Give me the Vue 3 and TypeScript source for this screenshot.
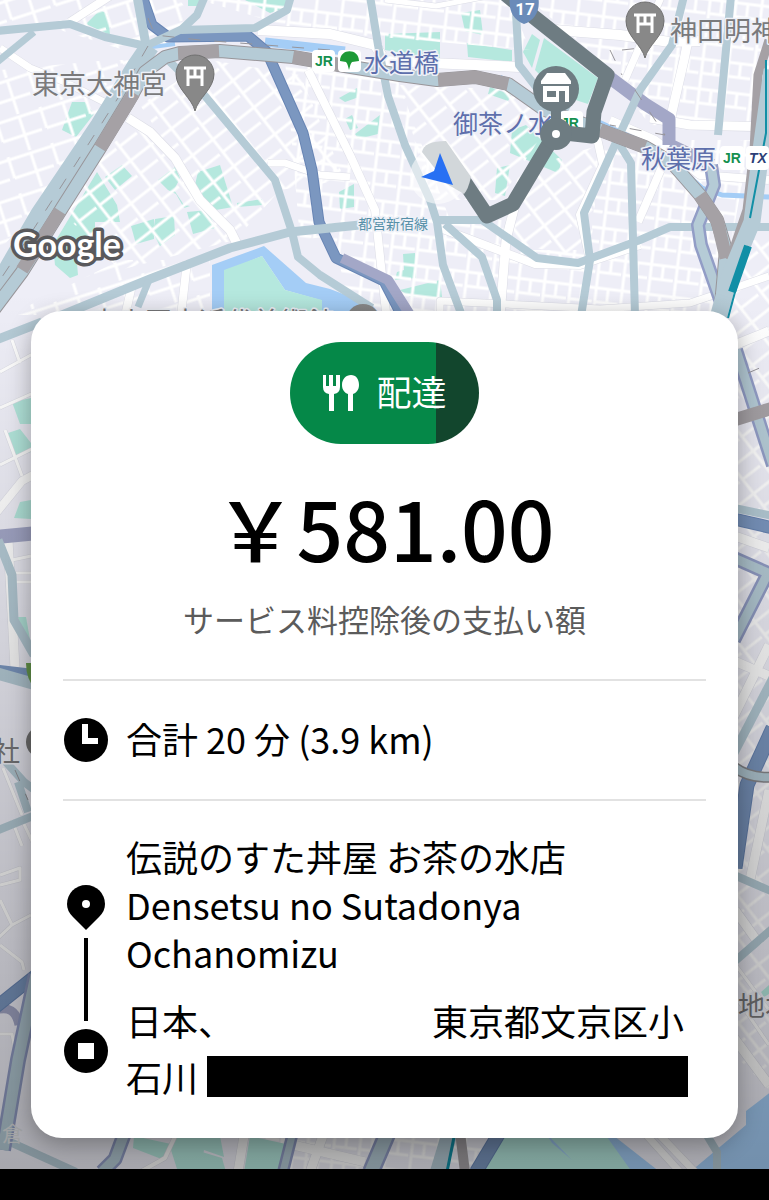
<script setup lang="ts">
interface Road {
  d: string
  w: number
}

const shrines: { x: number; y: number }[] = [
  { x: 195, y: 74 },
  { x: 645, y: 21 },
]

const blocks: { d: string; grid: string }[] = [
  { d: 'M0 0H180L200 30L140 55L60 30H0Z', grid: 'wide' },
  { d: 'M0 70L110 60L140 60L100 120L30 215L0 250Z', grid: 'wide' },
  { d: 'M100 155L140 120L190 190L235 240L120 270L65 215Z', grid: 'tilt' },
  { d: 'M140 105L210 60L300 75L345 180L280 190L235 240L170 150Z', grid: 'tilt' },
  { d: 'M0 320L120 260L210 260V315H0Z', grid: 'wide' },
  { d: 'M200 0H510L530 50L300 30Z', grid: 'dense' },
  { d: 'M285 60H390L450 220L300 240Z', grid: 'dense' },
  { d: 'M330 220H505V312H350Z', grid: 'dense' },
  { d: 'M400 85L520 90L545 130L500 200H430Z', grid: 'tilt' },
  { d: 'M520 170L600 145L590 260L500 240Z', grid: 'tilt' },
  { d: 'M505 250H730L715 312H505Z', grid: 'dense' },
  { d: 'M530 0H769V130L650 125L600 60Z', grid: 'dense' },
  { d: 'M600 140H750L730 250H590Z', grid: 'dense' },
  { d: 'M730 240H769V1090L730 1050Z', grid: 'tilt' },
  { d: 'M270 1130H500L470 1169H250Z', grid: 'dense' },
]

const parks: string[] = [
  'M188 0H206L204 6H188Z', 'M245 0H290L285 8L270 13Z', 'M86 24L100 10L108 14L110 35Z',
  'M72 102H85L94 114L76 137L62 130Z',
  'M97 172L117 205L120 222H95V235L75 240L78 275L70 278L55 265L53 245Z',
  'M105 177L122 165L132 176L115 190Z',
  'M158 180L175 167L180 178L174 190L184 205L190 206L184 208L176 194L168 190Z',
  'M198 172L220 165L233 207L210 211L193 193Z', 'M187 212L208 210L215 228L193 234Z',
  'M131 226L154 219V239L136 244Z', 'M155 219L174 216L175 235L160 246L153 233Z',
  'M237 203L262 199V205L237 207Z', 'M339 98L357 88L359 97L345 102Z',
  'M345 119L352 115L358 128L350 130Z', 'M355 134L380 115L378 134L358 139Z',
  'M339 192L354 184V207L340 209Z',
  'M385 34L440 32V60L385 50Z', 'M461 13L480 10L483 35L465 31Z',
  'M467 43L512 50V62L468 57Z', 'M523 52L532 34L540 40L532 68Z',
  'M490 87L511 95L508 101L488 94Z',
  'M512 130L526 125L562 160L558 173L510 153Z', 'M497 168L510 165L505 196L495 193Z',
  'M403 254L415 253L416 278L395 280L397 272L404 270Z', 'M400 290L440 280L442 297L410 297Z',
  'M12 402L31 398V424H20Z', 'M5 434L20 429L31 443L34 451L16 457Z',
  'M20 502L31 500V519L14 518Z', 'M18 617H26L31 645L20 630Z',
  'M134 1136L171 1144L164 1160L133 1148Z',
  'M769 985L761 992L764 997L769 994Z',
]

const openParks: string[] = [
  'M544 38L598 78L588 104L560 95L535 70Z',
  'M505 1130H602L640 1172H484Z',
  'M176 1136H220L224 1157L204 1150L200 1172H178L171 1150Z',
  'M202 1152L222 1158L226 1172H196Z',
  'M250 1136L286 1144L278 1172H244Z',
]

const waters: string[] = [
  'M212 265L264 246L306 283L330 289L372 305L382 316H322L320 300L285 290L262 256L224 272V316H212Z',
  'M602 1130L632 1172H660L600 1125Z', 'M545 1132L572 1160L552 1143Z',
  'M772 1091L746 1111V1125L690 1172H772Z',
]

const waterLines: Road[] = [
  { d: 'M265 42L345 51', w: 9 },
  { d: 'M48 238L80 165', w: 4 },
  { d: 'M0 276L20 240', w: 4 },
  { d: 'M500 77L530 96M590 118L660 150L702 188L722 195L769 197', w: 5 },
  { d: 'M145 48L175 44', w: 4 },
]

const streets: Road[] = [
  { d: 'M70 22L110 -4', w: 8 },
  { d: 'M0 48L30 68L65 82L108 104', w: 7 },
  { d: 'M258 30L330 34L375 45L385 61L520 67', w: 10 },
  { d: 'M128 118L150 132L175 158L200 200L230 230L238 246', w: 9 },
  { d: 'M308 70L350 155L375 210L386 312', w: 8 },
  { d: 'M268 163L285 163L320 175L350 177', w: 7 },
  { d: 'M187 262L181 316M132 285L125 316', w: 8 },
  { d: 'M555 30L620 35L670 42L700 41', w: 10 },
  { d: 'M692 20L684 60L672 112L666 150', w: 9 },
  { d: 'M625 80L662 -5', w: 7 },
  { d: 'M650 118L690 125L769 127', w: 9 },
  { d: 'M610 120L655 140L700 175L769 180', w: 8 },
  { d: 'M597 138L603 165L580 215L590 260', w: 8 },
  { d: 'M665 160L638 222', w: 8 },
  { d: 'M515 205L506 240L500 316', w: 9 },
  { d: 'M440 228L535 264L580 265L640 245', w: 8 },
  { d: 'M440 312V301L505 304L600 309L690 303L720 293L769 276', w: 7 },
  { d: 'M385 0L436 6L510 -8', w: 5 },
  { d: 'M-4 513L22 481L42 470', w: 8 },
  { d: 'M8 540L15 668', w: 9 },
  { d: 'M0 372L40 350M0 408L40 390M0 465L40 445M12 340L20 363M5 430L22 476', w: 3 },
  { d: 'M12 560L36 555M14 573H36M15 582H36', w: 3 },
  { d: 'M732 346L769 331M732 535L769 548M732 660L769 676', w: 9 },
  { d: 'M769 645L732 720M769 790L750 880M732 1035L769 1085M735 910L760 945', w: 9 },
  { d: 'M3 768L22 815M12 820L22 846M22 820L34 845M0 875L20 868V880L0 885M0 900L12 925L31 915M0 945L22 962L24 970M12 925L-4 940M0 1034L12 1034L14 1045', w: 3 },
  { d: 'M732 960L769 1010M738 1000L769 1045', w: 3 },
  { d: 'M245 1130L238 1172M285 1143L365 1162M325 1130L310 1172', w: 9 },
  { d: 'M655 1130L695 1172M640 1128L680 1172', w: 7 },
  { d: 'M140 1172L165 1158L178 1130', w: 4 },
]

const roads: Road[] = [
  { d: 'M-4 31L70 24L105 37L146 46', w: 8 },
  { d: 'M-4 63L34 32', w: 7 },
  { d: 'M137 -4L146 45', w: 9 },
  { d: 'M148 45L180 30L255 28L287 10L291 -4', w: 8 },
  { d: 'M205 -4L197 15L180 31', w: 8 },
  { d: 'M168 60L205 96L240 138L275 180L292 232L298 257L320 275L372 308', w: 8 },
  { d: 'M45 322L150 279L230 248L290 232L360 225', w: 9 },
  { d: 'M149 280L138 307', w: 7 },
  { d: 'M370 -4L378 45L388 96L405 145L430 200L437 222L443 265L462 316', w: 8 },
  { d: 'M436 220H482L537 258L578 263L640 240L670 227H773', w: 8 },
  { d: 'M445 224L482 257L497 300V316', w: 8 },
  { d: 'M515 -4L519 65L540 92L570 108', w: 8 },
  { d: 'M684 -4L672 45L640 90L618 138L584 213L590 260L581 316', w: 8 },
  { d: 'M618 142L631 163L635 316', w: 8 },
  { d: 'M731 -4L718 135', w: 8 },
  { d: 'M-4 340L42 322', w: 9 },
  { d: 'M-2 540L12 575L14 620L34 655', w: 9 },
  { d: 'M-4 673L38 685', w: 12 },
  { d: 'M6 762L24 782L36 791M18 782L28 812M-4 831L38 814', w: 8 },
  { d: 'M773 516L734 508', w: 8 },
  { d: 'M773 678L734 753', w: 9 },
  { d: 'M734 875L773 892M734 962L773 928', w: 8 },
  { d: 'M705 1132L717 1152V1172', w: 8 },
  { d: 'M10 1142L76 1172', w: 8 },
]

const casedRoads: Road[] = [
  { d: 'M711 165L714 185L698 225L701 245L722 305', w: 9 },
  { d: 'M736 350L773 465', w: 9 },
  { d: 'M734 558L768 573L734 640', w: 9 },
  { d: 'M36 975L18 1060L3 1150', w: 11 },
  { d: 'M102 1172L115 1159L125 1132', w: 10 },
  { d: 'M293 1132L283 1172', w: 7 },
  { d: 'M388 1132L371 1172', w: 13 },
]

const expressways: Road[] = [
  { d: 'M142 -4L152 25L168 37L248 36L267 52L303 133L312 170L319 222L336 258L384 281L402 316', w: 11 },
  { d: 'M734 519L773 528', w: 13 },
  { d: 'M773 728L747 785L735 868', w: 15 },
  { d: 'M-4 1007L36 975', w: 13 },
  { d: 'M476 1172L500 1132', w: 14 },
]
</script>

<template>
  <div class="screen">
    <main class="stage">
      <svg class="map" viewBox="0 0 769 1169" preserveAspectRatio="xMidYMin slice" role="img" aria-label="地図">
        <defs>
          <pattern id="wide" width="46" height="38" patternUnits="userSpaceOnUse" patternTransform="rotate(-18)">
            <path class="lane" d="M0 3H46M5 0V22M28 3V38M5 22H46" />
          </pattern>
          <pattern id="tilt" width="26" height="34" patternUnits="userSpaceOnUse" patternTransform="rotate(-38)">
            <path class="lane" d="M0 3H26M4 0V34M4 19H26" />
          </pattern>
          <pattern id="dense" width="26" height="30" patternUnits="userSpaceOnUse" patternTransform="rotate(7)">
            <path class="lane" d="M0 3H26M3 0V30M15 3V17M3 17H26" />
          </pattern>
          <linearGradient id="shade" x1="0" y1="0" x2="0" y2="1">
            <stop offset="0" stop-color="#000" stop-opacity="0" />
            <stop offset="0.25" stop-color="#000" stop-opacity="0" />
            <stop offset="1" stop-color="#000" stop-opacity="0.3" />
          </linearGradient>
        </defs>

        <rect width="769" height="1169" fill="#eeeef7" />
        <path v-for="(p, i) in parks" :key="'p' + i" :d="p" fill="#b5e8de" />
        <path v-for="(b, i) in blocks" :key="'b' + i" :d="b.d" :fill="`url(#${b.grid})`" />
        <path v-for="(p, i) in openParks" :key="'o' + i" :d="p" fill="#b5e8de" />
        <path v-for="(p, i) in waters" :key="'w' + i" :d="p" fill="#a4cdf6" />
        <path d="M224 270L262 256L285 290L322 300V316H224Z" fill="#b5e8de" />
        <g class="lines">
          <path v-for="(r, i) in waterLines" :key="'wl' + i" :d="r.d" :stroke-width="r.w" stroke="#a4cdf6" />
          <path v-for="(r, i) in streets" :key="'se' + i" :d="r.d" :stroke-width="r.w + 1" stroke="#dcdde6" />
          <path v-for="(r, i) in streets" :key="'s' + i" :d="r.d" :stroke-width="r.w" stroke="#fff" />

          <path d="M605 74L645 104L669 119V145M670 145L712 165" stroke="#a3a7c7" stroke-width="13" />
          <path d="M-4 537L38 533" stroke="#a3a7c7" stroke-width="14" />
          <path d="M-4 1010Q15 1004 19 1025" stroke="#a3a7c7" stroke-width="9" />
          <path v-for="(r, i) in expressways" :key="'xe' + i" :d="r.d" :stroke-width="r.w" stroke="#6885b4" />
          <path v-for="(r, i) in expressways" :key="'x' + i" :d="r.d" :stroke-width="r.w - 2" stroke="#7b97c0" />
          <path d="M342 258L388 280L412 318" stroke="#a3a7c7" stroke-width="10" />
          <path d="M-4 670L38 675" stroke="#7b97c0" stroke-width="11" />
          <path v-for="(r, i) in roads" :key="'r' + i" :d="r.d" :stroke-width="r.w" stroke="#b5cbd6" />
          <path d="M150 46L137 65L100 125L40 214L-10 300" stroke="#b5cbd6" stroke-width="19" />
          <path v-for="(r, i) in casedRoads" :key="'ce' + i" :d="r.d" :stroke-width="r.w + 5" stroke="#929dc6" />
          <path v-for="(r, i) in casedRoads" :key="'c' + i" :d="r.d" :stroke-width="r.w" stroke="#b5cbd6" />

          <path d="M-8 312L22 272L62 208L100 148L128 102L145 72L165 57L180 53L220 51L293 57L345 66L400 75L437 80L475 77L508 84L545 110L600 130L645 147L672 163L700 195L717 220L726 250L720 316" stroke="#989599" stroke-width="14" />
          <path d="M-8 312L22 272L62 208L100 148L128 102L145 72L165 57L180 53L220 51L293 57L345 66L400 75L437 80L475 77L508 84L545 110L600 130L645 147L672 163L700 195L717 220L726 250L720 316" stroke="#b5cbd6" stroke-width="12" />
          <path d="M22 270L60 211M100 148L134 93M178 53L219 51M293 57L345 66M438 80L475 77L508 84M600 130L645 147M700 195L717 220L726 258M734 420L773 408" stroke="#a5a1a5" stroke-width="13" />
          <path d="M769 40L758 75L754 150L747 210L730 260" stroke="#a5a1a5" stroke-width="9" />
          <path d="M772 70L761 150L752 222L730 275L718 318" stroke="#b5cbd6" stroke-width="17" />
          <path d="M766 60V133L750 218M748 246L735 292L728 318" stroke="#118fa6" stroke-width="2" />
          <path d="M748 246L732 292" stroke="#118fa6" stroke-width="8" />
          <path d="M438 1172L450 1132" stroke="#b5cbd6" stroke-width="16" />
          <path d="M455 1132L447 1172" stroke="#118fa6" stroke-width="3" />
          <path d="M460 1132L465 1172" stroke="#a5a1a5" stroke-width="10" />
          <path d="M734 767Q750 779 773 777" stroke="#89898d" stroke-width="11" />
          <path d="M734 767Q750 779 773 777" stroke="#b5cbd6" stroke-width="8" />
          <g class="dashes">
            <path d="M148 46L118 98L75 165L20 250L0 280" />
            <path d="M148 18L155 35L200 40L330 50M610 50L622 75M622 50L650 47M635 90L665 135L610 125M15 770L28 800M748 373L762 367" />
          </g>
        </g>

        <g class="place">
          <text x="32" y="94">東京大神宮</text>
          <text x="670" y="41">神田明神</text>
          <text x="91" y="332">東京国立近代美術館</text>
          <text x="-7" y="761">社</text>
          <text x="738" y="1016">地本</text>
        </g>
        <g class="station">
          <text x="364" y="72">水道橋</text>
          <text x="453" y="133">御茶ノ水</text>
          <text x="641" y="168">秋葉原</text>
        </g>
        <text class="line-name" x="358" y="229">都営新宿線</text>
        <text class="faint" x="2" y="1141">倉</text>

        <g>
          <rect x="312" y="50" width="23" height="22" rx="4" fill="#fff" />
          <rect x="338" y="50" width="23" height="22" rx="4" fill="#fff" />
          <path d="M340 61C340 48 359 48 359 61L352 62C350 64 350 67 349 70C348 67 348 64 346 62Z" fill="#1d9a36" />
          <rect x="560" y="111" width="23" height="24" rx="4" fill="#fff" />
          <rect x="720" y="146" width="24" height="24" rx="4" fill="#fff" />
          <rect x="746" y="146" width="23" height="24" rx="4" fill="#fff" />
          <text class="jr" x="315" y="66">JR</text>
          <text class="jr" x="561" y="128">JR</text>
          <text class="jr" x="723" y="163">JR</text>
          <text class="jr tx" x="749" y="163">TX</text>
        </g>

        <circle cx="363" cy="321" r="17" fill="#888" />
        <circle cx="42" cy="742" r="16" fill="#777" />
        <path d="M26 663H36V690Q26 680 26 663" fill="#6b9f50" />
        <g v-for="s in shrines" :key="s.x" :transform="`translate(${s.x} ${s.y})`">
          <path d="M0 37C-3 24 -19 15 -19 0A19 19 0 0 1 19 0C19 15 3 24 0 37Z" fill="#888" stroke="#707070" />
          <path d="M-11 -6H11M-8 3H8M-7 -6V12M7 -6V12M0 -6V3" fill="none" stroke="#fff" stroke-width="3" />
        </g>

        <path class="route" d="M503 -8L525 10L607 75L594 112L592 136L556 132L513 204L487 216L455 168" />
        <circle cx="438" cy="176" r="28" fill="#fff" fill-opacity="0.55" />
        <path d="M422 152Q424 141 446 141L471 177Q468 190 464 194L447 184Z" fill="#d2d7da" />
        <path d="M440 153L453 185L421 177L434 171Z" fill="#2870f3" />
        <path d="M510 -4H538C541 10 535 20 524 24C513 20 508 10 510 -4Z" fill="#6a8bb9" />
        <text class="shield" x="525" y="15">17</text>

        <path d="M556 100V134" stroke="#6e7c82" stroke-width="10" />
        <circle cx="556" cy="89" r="23" fill="#6e7c82" />
        <circle cx="556" cy="134" r="16" fill="#6e7c82" />
        <circle cx="556" cy="134" r="4" fill="#fff" />
        <path d="M547 73H565L571 81V84H541V81Z" fill="#fff" />
        <path d="M543 86H569V102H565V91H559V102H543ZM547 91V97H556V91Z" fill="#fff" fill-rule="evenodd" />
        <text class="google" x="13" y="257">Google</text>
        <rect width="769" height="1169" fill="url(#shade)" />
      </svg>

      <section class="card">
        <div class="badge">
          <svg class="badge-icon" viewBox="0 0 38 38" aria-hidden="true">
            <path d="M1 1H4V12H7V1H11V12H14V1H18V13Q18 19 12 20V37H7V20Q1 19 1 13Z" />
            <path d="M29 1C34 1 37 5 37 11C37 16 34 19 31 20V37H26V20C23 19 20 16 20 11C20 5 24 1 29 1Z" />
          </svg>
          <span class="label">配達</span>
        </div>
        <h1 class="fare">￥581.00</h1>
        <p class="note">サービス料控除後の支払い額</p>

        <div class="trip">
          <svg class="round-icon" viewBox="0 0 44 44" aria-hidden="true">
            <circle cx="22" cy="22" r="22" />
            <path d="M18 6H24V20H34V26H18Z" fill="#fff" />
          </svg>
          <span class="label">合計 20 分 (3.9 km)</span>
        </div>

        <div class="stops">
          <div class="rail" aria-hidden="true">
            <svg class="pin" viewBox="0 0 38 45">
              <path d="M19 45L6 32C2 28 0 24 0 19A19 19 0 0 1 38 19C38 24 36 28 32 32Z" />
              <circle cx="19" cy="19" r="4" fill="#fff" />
            </svg>
            <span class="rail-line"></span>
            <svg class="round-icon" viewBox="0 0 44 44">
              <circle cx="22" cy="22" r="22" />
              <rect x="14" y="14" width="16" height="16" fill="#fff" />
            </svg>
          </div>
          <div class="places">
            <p class="shop">伝説のすた丼屋 お茶の水店<br />Densetsu no Sutadonya Ochanomizu</p>
            <div class="address">
              <div class="address-row"><span>日本、</span><span class="blank"></span><span>東京都文京区小</span></div>
              <div class="address-row"><span>石川</span><span class="redacted"></span></div>
            </div>
          </div>
        </div>
      </section>
    </main>
    <footer class="nav-bar"></footer>
  </div>
</template>

<style>
body {
  background: #000;
}
</style>

<style scoped>
.screen {
  display: flex;
  flex-direction: column;
  min-height: 100vh;
  font-family: "Noto Sans CJK JP", "Noto Sans", sans-serif;
  color: #000;
}

.stage {
  position: relative;
  flex: 1;
  padding: 311px 31px 31px;
  overflow: hidden;
}

.map {
  position: absolute;
  inset: 0;
  width: 100%;
  height: 100%;
}

.lane {
  fill: none;
  stroke: #fff;
  stroke-width: 3;
}

.lines {
  fill: none;
  stroke-linejoin: round;
}

.dashes {
  stroke: #97959a;
  stroke-width: 1;
  stroke-dasharray: 12 14;
}

.place text,
.station text,
.line-name {
  paint-order: stroke;
  stroke: #eef1f8;
  stroke-width: 3px;
  stroke-linejoin: round;
}

.place text {
  font-size: 27px;
  fill: #7a7a7c;
}

.station text {
  font-size: 25px;
  fill: #5e6fac;
}

.line-name {
  font-size: 14px;
  fill: #5790a8;
}

.faint {
  font-size: 21px;
  fill: #dfe2e4;
}

.jr {
  font: bold 14px "Liberation Sans", sans-serif;
  fill: #14904f;
}

.tx {
  font-style: italic;
  fill: #2c3f78;
}

.shield {
  font: bold 17px Roboto, sans-serif;
  text-anchor: middle;
  fill: #fff;
}

.route {
  fill: none;
  stroke: #6e7c82;
  stroke-width: 15;
  stroke-linejoin: round;
}

.google {
  font: bold 34px Lato, sans-serif;
  fill: #fff;
  stroke: #59595c;
  stroke-width: 7px;
  stroke-linejoin: round;
  paint-order: stroke;
}

.card {
  position: relative;
  display: flex;
  flex-direction: column;
  padding: 31px 32px 34px;
  border-radius: 31px;
  background: #fff;
  box-shadow: 0 6px 24px rgba(0, 0, 0, 0.32);
}

.badge {
  display: flex;
  align-items: center;
  align-self: center;
  gap: 16px;
  height: 102px;
  padding: 0 32px;
  border-radius: 51px;
  background: linear-gradient(to right, #058848 77%, #12462d 77%);
  color: #fff;
  font-size: 35px;
  line-height: 48px;
}

.badge-icon {
  width: 38px;
  height: 38px;
  fill: #fff;
}

.label {
  padding-bottom: 4px;
}

.fare {
  margin: 31px 0 0;
  font-size: 82px;
  font-weight: 500;
  line-height: 104px;
  text-align: center;
}

.note {
  margin: 16px 0 0;
  padding-bottom: 36px;
  border-bottom: 2px solid #e2e2e2;
  color: #5b5b5b;
  font-size: 31px;
  line-height: 48px;
  text-align: center;
}

.trip {
  display: flex;
  align-items: center;
  gap: 18px;
  height: 118px;
  padding-left: 1px;
  border-bottom: 2px solid #e2e2e2;
  font-size: 36px;
  line-height: 48px;
}

.round-icon {
  flex: none;
  width: 44px;
  height: 44px;
}

.stops {
  display: flex;
  gap: 18px;
  padding: 31px 0 0 1px;
  font-size: 36px;
}

.rail {
  display: flex;
  flex-direction: column;
  align-items: center;
  gap: 8px;
  padding: 53px 0 31px;
}

.pin {
  width: 38px;
  height: 45px;
}

.rail-line {
  flex: 1;
  width: 4px;
  background: #000;
}

.places {
  flex: 1;
  min-width: 0;
}

.shop {
  margin: 0 0 16px;
  line-height: 48px;
}

.address {
  line-height: 56px;
}

.address-row {
  display: flex;
  align-items: center;
}

.blank {
  flex: 0 1 198px;
}

.redacted {
  flex: 1;
  height: 41px;
  margin: 0 18px 0 9px;
  background: #000;
}

.nav-bar {
  height: 31px;
  background: #000;
}
</style>
